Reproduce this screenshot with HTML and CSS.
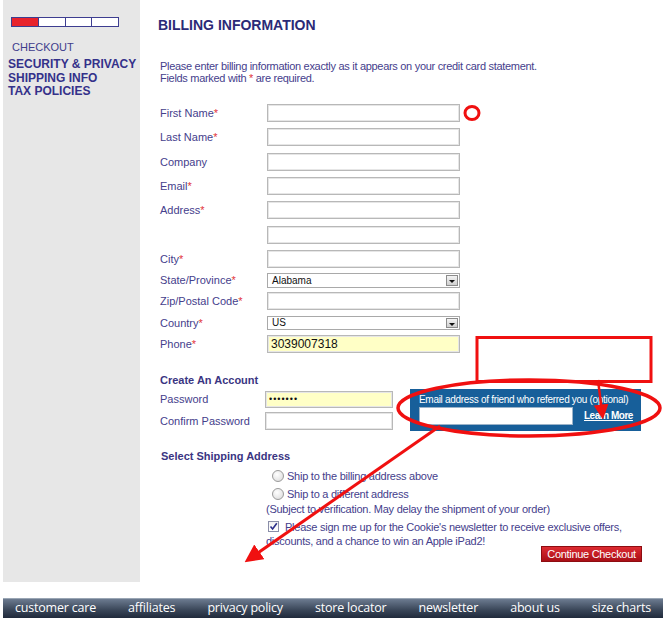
FILE: index.html
```html
<!doctype html>
<html lang="en">
	<head>
		<meta charset="utf-8">
		<title>Billing Information</title>
		<meta name="viewport" content="width=device-width, initial-scale=1.0">
		<link rel="stylesheet" href="styles.css">
	</head>
	<body>
	<div id="page">
		<div id="side">
			<div class="steps"><span class="on"></span><span></span><span></span><span></span></div>
			<p class="side-title">CHECKOUT</p>
			<ul class="side-nav">
				<li><a href="#">SECURITY &amp; PRIVACY</a></li>
				<li><a href="#">SHIPPING INFO</a></li>
				<li><a href="#">TAX POLICIES</a></li>
			</ul>
		</div>
		<div id="main">
			<h1>BILLING INFORMATION</h1>
			<p class="intro">Please enter billing information exactly as it appears on your credit card statement.<br>Fields marked with <em>*</em> are required.</p>

			<div class="billing">
				<div class="row"><label>First Name<em>*</em></label><input type="text" class="txt"></div>
				<div class="row"><label>Last Name<em>*</em></label><input type="text" class="txt"></div>
				<div class="row"><label>Company</label><input type="text" class="txt"></div>
				<div class="row"><label>Email<em>*</em></label><input type="text" class="txt"></div>
				<div class="row"><label>Address<em>*</em></label><input type="text" class="txt"></div>
				<div class="row"><label></label><input type="text" class="txt"></div>
				<div class="row"><label>City<em>*</em></label><input type="text" class="txt"></div>
				<div class="row r-state"><label>State/Province<em>*</em></label><div class="sel"><span>Alabama</span><i class="drop"></i></div></div>
				<div class="row r-zip"><label>Zip/Postal Code<em>*</em></label><input type="text" class="txt"></div>
				<div class="row r-country"><label>Country<em>*</em></label><div class="sel sel-short"><span>US</span><i class="drop"></i></div></div>
				<div class="row r-phone"><label>Phone<em>*</em></label><input type="text" class="txt filled" value="3039007318"></div>
			</div>

			<h2 class="acct-title">Create An Account</h2>
			<div class="acct">
				<div class="acct-fields">
					<div class="arow a-pass"><label>Password</label><input type="password" class="txt pw filled" value="1234567"></div>
					<div class="arow a-confirm"><label>Confirm Password</label><input type="password" class="txt pw"></div>
				</div>
				<div class="refer">
					<p>Email address of friend who referred you (optional)</p>
					<div class="refer-line"><input type="text" class="refer-in"><a href="#">Learn More</a></div>
				</div>
			</div>

			<h2 class="ship-title">Select Shipping Address</h2>
			<div class="ship">
				<div class="opt o-first"><span class="radio"></span>Ship to the billing address above</div>
				<div class="opt"><span class="radio"></span>Ship to a different address</div>
				<p class="note">(Subject to verification. May delay the shipment of your order)</p>
				<p class="news"><span class="check"><svg width="9" height="9" viewBox="0 0 9 9"><path d="M1.5 4.5 L3.6 7 L7.8 1.2" fill="none" stroke="#2b2f8a" stroke-width="1.6"/></svg></span>Please sign me up for the Cookie's newsletter to receive exclusive offers,<br>discounts, and a chance to win an Apple iPad2!</p>
				<div class="go"><a href="#" class="btn">Continue Checkout</a></div>
			</div>
		</div>
	</div>

	<div id="foot">
		<a href="#">customer care</a>
		<a href="#">affiliates</a>
		<a href="#">privacy policy</a>
		<a href="#">store locator</a>
		<a href="#">newsletter</a>
		<a href="#">about us</a>
		<a href="#">size charts</a>
	</div>

	<!-- red review marks drawn over the page -->
	<svg class="marks" width="663" height="618" viewBox="0 0 663 618">
		<defs>
			<marker id="head" markerWidth="6" markerHeight="6" refX="3" refY="3" orient="auto" markerUnits="strokeWidth">
				<path d="M0 0 L6 3 L0 6 Z" fill="#f01010"/>
			</marker>
		</defs>
		<ellipse cx="472" cy="113" rx="7" ry="6.5" fill="none" stroke="#f01010" stroke-width="3"/>
		<rect x="477" y="337.5" width="174" height="44" fill="none" stroke="#f01010" stroke-width="3"/>
		<ellipse cx="529" cy="408" rx="131" ry="28" fill="none" stroke="#f01010" stroke-width="3.5"/>
		<line x1="598" y1="380" x2="602" y2="412" stroke="#f01010" stroke-width="2.5" marker-end="url(#head)"/>
		<line x1="440" y1="426" x2="252" y2="557" stroke="#f01010" stroke-width="3" marker-end="url(#head)"/>
	</svg>
	</body>
</html>
```

FILE: styles.css
```css
*{margin: 0;padding: 0;}
ul li{list-style: none;}
a{ text-decoration:none;}

body{
	position: relative;
	width: 663px;
	height: 618px;
	overflow: hidden;
	background: #fff;
	font-family: "Liberation Sans", Arial, sans-serif;
	color: #45408c;
}
#page{
	display: flex;
}

/* left column */
#side{
	width: 137px;
	height: 582px;
	margin-left: 3px;
	padding: 17px 0 0 8px;
	box-sizing: border-box;
	background: #e7e7e7;
}
#side .steps{
	display: flex;
	width: 108px;
	height: 10px;
	box-sizing: border-box;
	border: 1px solid #3d3d90;
	background: #fff;
}
#side .steps span{
	flex: 1;
	border-left: 1px solid #3d3d90;
}
#side .steps span.on{
	border-left: 0;
	background: #e8232c;
}
#side .side-title{
	margin: 14px 0 0 1px;
	font-size: 11px;
	line-height: 12px;
	color: #3f3d8c;
}
#side .side-nav{
	margin: 5px 0 0 -3px;
}
#side .side-nav li{
	font-size: 12px;
	line-height: 13.5px;
	font-weight: bold;
}
#side .side-nav a{
	color: #34318a;
}

/* main column */
#main{
	flex: 1;
	padding: 17px 21px 0 18px;
}
#main h1{
	font-size: 14px;
	line-height: 16px;
	font-weight: bold;
	color: #2b2a77;
}
#main em{
	font-style: normal;
	color: #e2343c;
}
#main .intro{
	margin: 27px 0 0 2px;
	font-size: 11px;
	line-height: 12px;
	letter-spacing: -0.3px;
}

.billing{
	margin: 20px 0 0 2px;
}
.billing .row{
	display: flex;
	align-items: center;
	margin-bottom: 6.33px;
}
.billing .row label,
.acct .arow label{
	width: 107px;
	font-size: 11px;
	line-height: 12px;
}
.txt{
	width: 193px;
	height: 18px;
	box-sizing: border-box;
	border: 1px solid #b8b8b8;
	box-shadow: inset 0 0 0 1px #e6e6e6;
	background: #fff;
	font-family: "Liberation Sans", Arial, sans-serif;
	font-size: 12px;
	padding: 0 3px;
	color: #111;
	outline: none;
}
.txt.filled{
	background: #ffffc6;
}
.billing .r-state{
	margin: -1.33px 0 4px;
}
.billing .r-zip{
	margin-bottom: 6px;
}
.billing .r-country{
	margin-bottom: 5px;
}
.billing .r-phone{
	margin-bottom: 0;
}
.sel{
	position: relative;
	width: 193px;
	height: 15px;
	box-sizing: border-box;
	border: 1px solid #a9a9a9;
	background: #fff;
	font-size: 10px;
	line-height: 13px;
	color: #111;
	padding-left: 4px;
}
.sel.sel-short{
	height: 14px;
	line-height: 12px;
}
.sel .drop{
	position: absolute;
	right: 1px;
	top: 1px;
	bottom: 1px;
	width: 12px;
	box-sizing: border-box;
	border: 1px solid #8c8c8c;
	background: linear-gradient(#f4f4f4, #cfcfcf);
}
.sel .drop:after{
	content: "";
	position: absolute;
	left: 2px;
	top: 4px;
	border-left: 3px solid transparent;
	border-right: 3px solid transparent;
	border-top: 3px solid #111;
}

/* account */
#main h2{
	font-size: 11px;
	line-height: 12px;
	font-weight: bold;
	color: #3a3582;
}
#main .acct-title{
	margin: 21px 0 0 2px;
}
.acct{
	display: flex;
	margin: 3px 0 0 2px;
}
.acct .arow{
	display: flex;
	align-items: center;
}
.acct .arow label{
	width: 105px;
}
.acct .a-pass{
	margin-top: 2px;
}
.acct .a-confirm{
	margin-top: 4px;
}
.acct .pw{
	width: 128px;
	height: 17px;
	font-size: 9px;
	letter-spacing: 1px;
}
.acct .a-confirm .pw{
	height: 18px;
}
.refer{
	width: 231px;
	height: 42px;
	margin-left: 17px;
	box-sizing: border-box;
	padding: 5px 0 0 9px;
	background: #175f9a;
	color: #fff;
}
.refer p{
	font-size: 10px;
	line-height: 11px;
	letter-spacing: -0.3px;
}
.refer-line{
	display: flex;
	align-items: center;
	margin-top: 2px;
}
.refer-in{
	width: 154px;
	height: 18px;
	box-sizing: border-box;
	border: 1px solid #9bb3c9;
	background: #fff;
	outline: none;
}
.refer-line a{
	margin-left: 11px;
	font-size: 10px;
	font-weight: bold;
	letter-spacing: -0.5px;
	color: #fff;
	text-decoration: underline;
}

/* shipping */
#main .ship-title{
	margin: 19px 0 0 3px;
}
.ship{
	padding-left: 110px;
	font-size: 11px;
	letter-spacing: -0.25px;
}
.ship .opt{
	display: flex;
	align-items: center;
	height: 18px;
}
.ship .o-first{
	margin-top: 5px;
}
.ship .radio{
	width: 12px;
	height: 12px;
	margin: 0 3px 0 4px;
	box-sizing: border-box;
	border: 1px solid #9a9a9a;
	border-radius: 50%;
	background: radial-gradient(circle at 40% 35%, #fff, #d8d8d8);
}
.ship .note{
	line-height: 13px;
	margin-left: -2px;
}
.ship .news{
	margin: 4px 0 0 -2px;
	line-height: 14px;
}
.ship .check{
	display: inline-block;
	width: 11px;
	height: 11px;
	margin: 0 6px 0 2px;
	box-sizing: border-box;
	border: 1px solid #8b8fa9;
	background: linear-gradient(#f2f2f2, #fff);
	vertical-align: -1px;
}
.ship .check svg{
	display: block;
}
.ship .go{
	display: flex;
	justify-content: flex-end;
	margin-top: -2px;
}
.btn{
	display: block;
	width: 101px;
	height: 16px;
	box-sizing: border-box;
	border: 1px solid #8e0c11;
	background: linear-gradient(#dd2b31, #a90f16);
	color: #fff;
	font-size: 11px;
	line-height: 14px;
	letter-spacing: -0.3px;
	text-align: center;
}

/* footer */
#foot{
	display: flex;
	justify-content: space-between;
	align-items: center;
	height: 20px;
	margin: 16px 0 0 3px;
	padding: 0 12px;
	border-top: 1px solid #9aa6b4;
	background: linear-gradient(#6c7b90, #3a4658 55%, #1d2738);
}
#foot a{
	font-family: "Open Sans", "DejaVu Sans", sans-serif;
	font-size: 12.5px;
	line-height: 16px;
	color: #fff;
	letter-spacing: -0.2px;
	margin-top: -2px;
}

.marks{
	position: absolute;
	left: 0;
	top: 0;
	pointer-events: none;
}
```
